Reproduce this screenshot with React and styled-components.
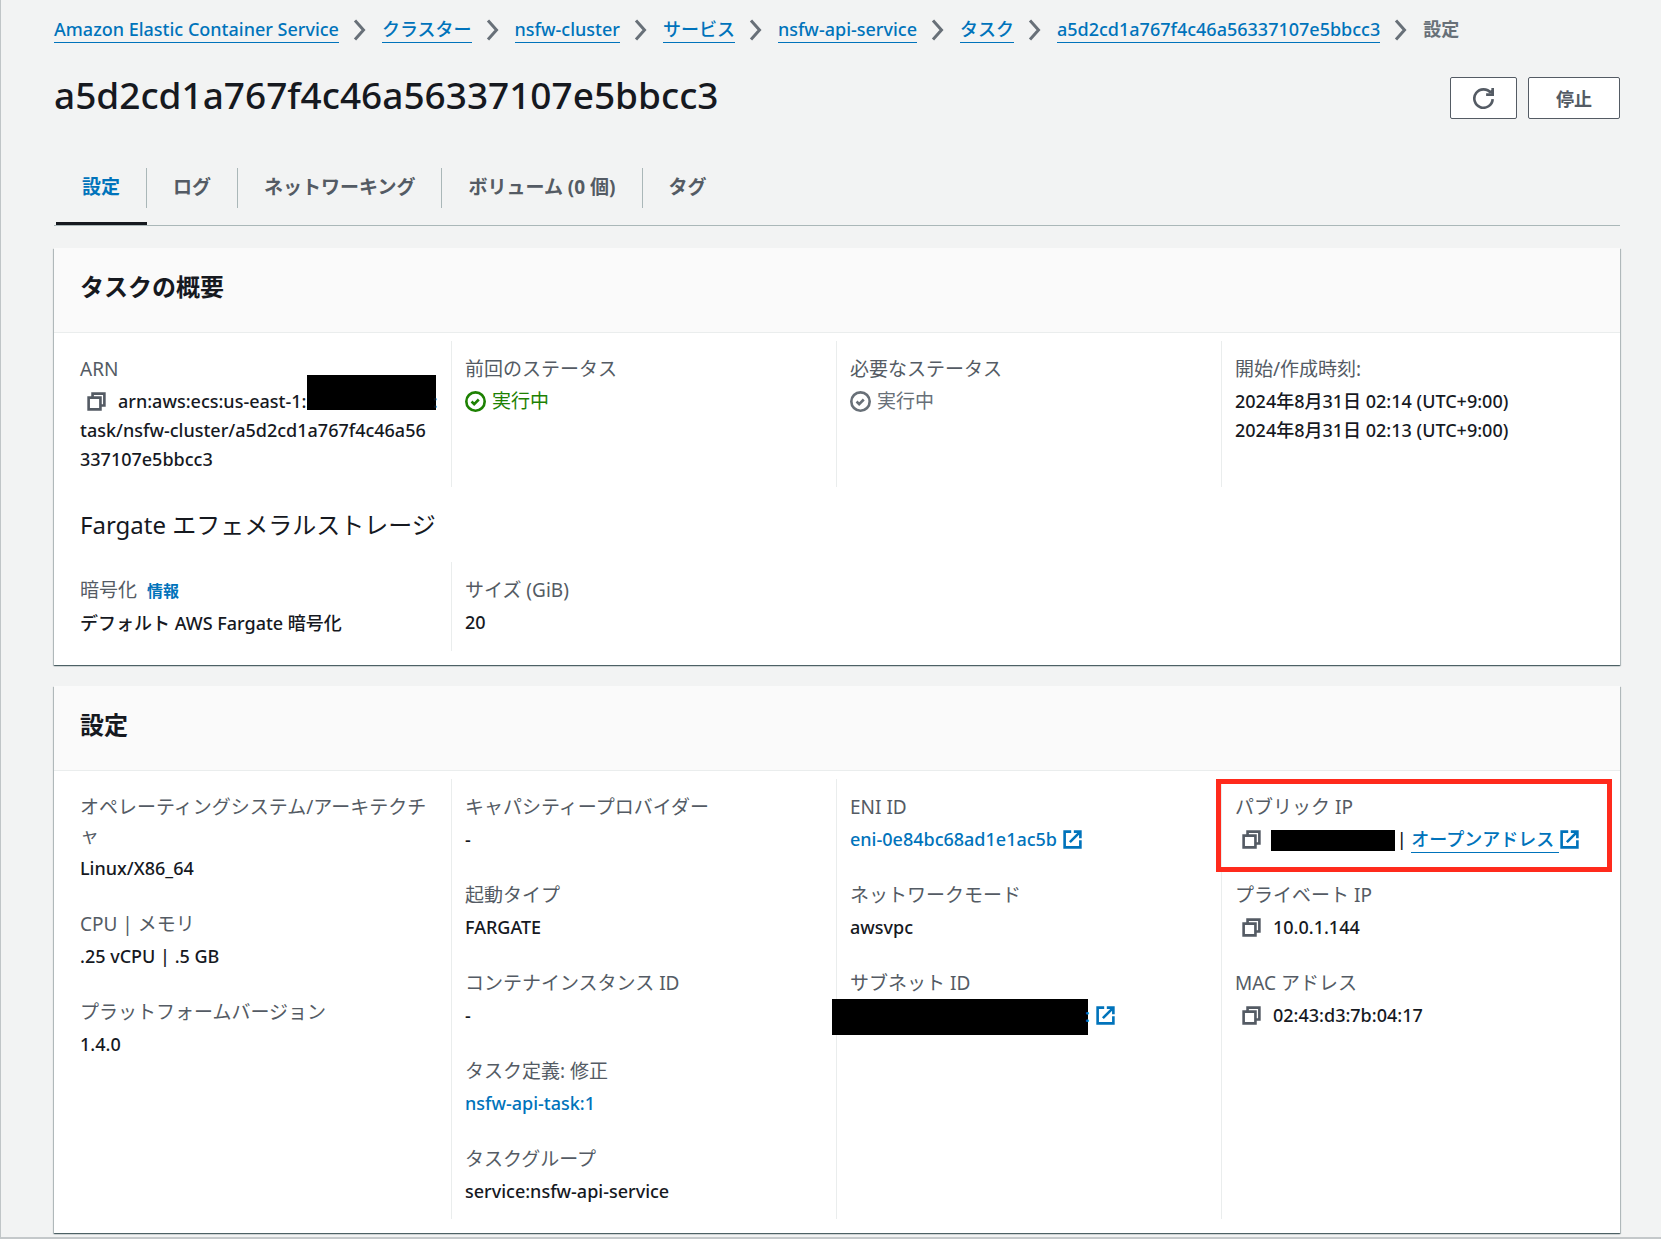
import styled, { createGlobalStyle } from "styled-components";

const GlobalStyle = createGlobalStyle`
  * {
    box-sizing: border-box;
  }

  body {
    margin: 0;
    background-color: #fff;
    color: #16191f;
    font-family: "Noto Sans", "Noto Sans CJK JP", sans-serif;
    font-size: 18px;
    font-weight: 500;
    line-height: 29px;
  }
`;

const Page = styled.div`
  background-color: #f2f3f3;
  border-left: 1px solid #c0c5c7;
  border-bottom: 2px solid #c4c8ca;
  padding: 15px 41px 4px 53px;
`;

const Breadcrumbs = styled.ol`
  display: flex;
  flex-wrap: wrap;
  align-items: center;
  margin: 0;
  padding: 0;
  list-style: none;
`;

const Crumb = styled.li`
  display: flex;
  align-items: center;
  color: #687078;
  font-weight: ${(props) => (props.$current ? 700 : 500)};

  svg {
    margin: 0 15px 0 14px;
  }
`;

const Link = styled.a`
  color: #0073bb;
  text-decoration: none;
`;

const UnderlinedLink = styled(Link)`
  border-bottom: 1px solid #0073bb;
  line-height: 26px;
`;

const TitleBar = styled.header`
  display: flex;
  justify-content: space-between;
  align-items: center;
  margin-top: 28px;
`;

const Title = styled.h1`
  margin: 0;
  padding-bottom: 6px;
  font-size: 37px;
  font-weight: 500;
  line-height: 46px;
`;

const Actions = styled.div`
  display: flex;
  gap: 11px;
`;

const Button = styled.button`
  display: flex;
  align-items: center;
  justify-content: center;
  height: 42px;
  padding: 0 ${(props) => (props.$icon ? 22 : 27)}px;
  background-color: #fff;
  border: 1px solid #545b64;
  border-radius: 2px;
  color: #545b64;
  font-family: inherit;
  font-size: 18px;
  font-weight: 700;
  cursor: pointer;
`;

const Tabs = styled.div`
  display: flex;
  margin-top: 44px;
  padding-left: 2px;
  border-bottom: 1px solid #aab7b8;
`;

const Tab = styled.button`
  height: 57px;
  padding: 0 0 14px;
  background: none;
  border: none;
  border-bottom: 3px solid ${(props) => (props.$active ? "#16191f" : "transparent")};
  color: ${(props) => (props.$active ? "#0073bb" : "#545b64")};
  font-family: inherit;
  font-size: 19px;
  font-weight: 700;
  line-height: 38px;
  cursor: pointer;
`;

const TabLabel = styled.span`
  display: block;
  height: 40px;
  padding: 0 26px;
  border-right: 1px solid ${(props) => (props.$last ? "transparent" : "#aab7b8")};
`;

const Card = styled.section`
  margin-top: ${(props) => (props.$first ? 22 : 21)}px;
  padding-bottom: 14px;
  background-color: #fff;
  box-shadow: 0 1px 1px 0 rgba(0, 28, 36, 0.5), 1px 1px 1px 0 rgba(0, 28, 36, 0.2),
    -1px 1px 1px 0 rgba(0, 28, 36, 0.2);
`;

const CardHeader = styled.div`
  padding: 21px 26px 27px;
  background-color: #fafafa;
  border-bottom: 1px solid #eaeded;
`;

const CardTitle = styled.h2`
  margin: 0;
  font-size: 24px;
  font-weight: 700;
  line-height: 36px;
`;

const SubTitle = styled.h3`
  margin: 0;
  padding: 20px 26px 19px;
  font-size: 24px;
  font-weight: 400;
  line-height: 36px;
`;

const Columns = styled.div`
  display: grid;
  grid-template-columns: repeat(4, minmax(0, 1fr));
  margin-top: ${(props) => (props.$first ? 8 : 0)}px;
  padding: 0 14px 0 12px;
`;

const Column = styled.dl`
  display: flex;
  flex-direction: column;
  gap: 27px;
  margin: 0;
  padding: 14px 13px 13px 14px;

  & + & {
    padding-left: 13px;
    border-left: 1px solid #eaeded;
  }
`;

const FieldBox = styled.div`
  position: relative;
`;

const Label = styled.dt`
  color: #545b64;
  font-size: 19px;
  font-weight: 400;
  word-break: break-all;
`;

const Value = styled.dd`
  margin: 3px 0 0;
  padding-right: 4px;
  word-break: break-all;
`;

const Line = styled.span`
  display: flex;
  align-items: center;
  white-space: pre;
`;

const CopyButton = styled.button`
  display: flex;
  padding: 0 11px 0 6px;
  background: none;
  border: none;
  color: #545b64;
  cursor: pointer;
`;

const Status = styled.span`
  display: flex;
  align-items: center;
  gap: 6px;
  color: ${(props) => props.$color};
  font-size: 19px;
  font-weight: 400;
`;

const InfoLink = styled(Link)`
  margin-left: 10px;
  font-size: 16px;
  font-weight: 700;
`;

const Mask = styled.span`
  flex: none;
  width: ${(props) => props.$width}px;
  height: ${(props) => props.$height}px;
  margin: ${(props) => (props.$raised ? -24 : -4)}px -3px -6px ${(props) => props.$pull || 0}px;
  background-color: #000;
`;

const Highlight = styled.div`
  position: absolute;
  inset: -14px -19px -18px -19px;
  border: 5px solid #ff2a1c;
  pointer-events: none;
`;

const Icon = ({ children, color = "currentColor" }) => (
  <svg
    width="21"
    height="21"
    viewBox="0 0 16 16"
    fill="none"
    stroke={color}
    strokeWidth="2"
    aria-hidden="true"
  >
    {children}
  </svg>
);

const ChevronIcon = () => (
  <svg width="14" height="22" viewBox="0 0 14 22" fill="none" stroke="#687078" strokeWidth="3" aria-hidden="true">
    <path d="M2 1.5l8.5 9.5L2 20.5" />
  </svg>
);

const CopyIcon = () => (
  <Icon>
    <path d="M2 5h9v9H2z" />
    <path d="M5 5V2h9v9h-3" />
  </Icon>
);

const ExternalIcon = () => (
  <Icon color="#0073bb">
    <path d="M14 8.5V14H2V2h5" />
    <path d="M9 2h5v5M6 10l8-8" />
  </Icon>
);

const CheckIcon = () => (
  <Icon>
    <circle cx="8" cy="8" r="7" />
    <path d="M5 8l2 2 3.5-3.5" />
  </Icon>
);

const RefreshIcon = () => (
  <Icon>
    <path d="M15 8.5A7 7 0 1 1 13.6 3.8" />
    <path d="M10 5h5V0" />
    <path d="M12.5 2.5L15 5V1z" fill="currentColor" stroke="none" />
  </Icon>
);

const Copy = () => (
  <CopyButton type="button" aria-label="コピー">
    <CopyIcon />
  </CopyButton>
);

const Field = ({ label, highlighted, children }) => (
  <FieldBox>
    <Label>{label}</Label>
    <Value>{children}</Value>
    {highlighted && <Highlight />}
  </FieldBox>
);

const crumbs = [
  "Amazon Elastic Container Service",
  "クラスター",
  "nsfw-cluster",
  "サービス",
  "nsfw-api-service",
  "タスク",
  "a5d2cd1a767f4c46a56337107e5bbcc3",
];

const tabs = ["設定", "ログ", "ネットワーキング", "ボリューム (0 個)", "タグ"];

const App = () => {
  return (
    <>
      <GlobalStyle />
      <Page>
        <nav>
          <Breadcrumbs>
            {crumbs.map((crumb) => (
              <Crumb key={crumb}>
                <UnderlinedLink href="#">{crumb}</UnderlinedLink>
                <ChevronIcon />
              </Crumb>
            ))}
            <Crumb $current>設定</Crumb>
          </Breadcrumbs>
        </nav>

        <TitleBar>
          <Title>a5d2cd1a767f4c46a56337107e5bbcc3</Title>
          <Actions>
            <Button type="button" $icon aria-label="更新">
              <RefreshIcon />
            </Button>
            <Button type="button">停止</Button>
          </Actions>
        </TitleBar>

        <Tabs role="tablist">
          {tabs.map((tab, i) => (
            <Tab key={tab} type="button" role="tab" aria-selected={i === 0} $active={i === 0}>
              <TabLabel $last={i === tabs.length - 1}>{tab}</TabLabel>
            </Tab>
          ))}
        </Tabs>

        <Card $first>
          <CardHeader>
            <CardTitle>タスクの概要</CardTitle>
          </CardHeader>
          <Columns $first>
            <Column>
              <Field label="ARN">
                <Line>
                  <Copy />
                  arn:aws:ecs:us-east-1:2
                  <Mask $width={129} $height={35} $pull={-10} $raised />:
                </Line>
                task/nsfw-cluster/a5d2cd1a767f4c46a56337107e5bbcc3
              </Field>
            </Column>
            <Column>
              <Field label="前回のステータス">
                <Status $color="#1d8102">
                  <CheckIcon />
                  実行中
                </Status>
              </Field>
            </Column>
            <Column>
              <Field label="必要なステータス">
                <Status $color="#687078">
                  <CheckIcon />
                  実行中
                </Status>
              </Field>
            </Column>
            <Column>
              <Field label="開始/作成時刻:">
                <Line>2024年8月31日 02:14 (UTC+9:00)</Line>
                <Line>2024年8月31日 02:13 (UTC+9:00)</Line>
              </Field>
            </Column>
          </Columns>
          <SubTitle>Fargate エフェメラルストレージ</SubTitle>
          <Columns>
            <Column>
              <Field
                label={
                  <>
                    暗号化<InfoLink href="#">情報</InfoLink>
                  </>
                }
              >
                デフォルト AWS Fargate 暗号化
              </Field>
            </Column>
            <Column>
              <Field label="サイズ (GiB)">20</Field>
            </Column>
          </Columns>
        </Card>

        <Card>
          <CardHeader>
            <CardTitle>設定</CardTitle>
          </CardHeader>
          <Columns $first>
            <Column>
              <Field label="オペレーティングシステム/アーキテクチャ">Linux/X86_64</Field>
              <Field label="CPU | メモリ">.25 vCPU | .5 GB</Field>
              <Field label="プラットフォームバージョン">1.4.0</Field>
            </Column>
            <Column>
              <Field label="キャパシティープロバイダー">-</Field>
              <Field label="起動タイプ">FARGATE</Field>
              <Field label="コンテナインスタンス ID">-</Field>
              <Field label="タスク定義: 修正">
                <Link href="#">nsfw-api-task:1</Link>
              </Field>
              <Field label="タスクグループ">service:nsfw-api-service</Field>
            </Column>
            <Column>
              <Field label="ENI ID">
                <Link href="#">
                  <Line>
                    eni-0e84bc68ad1e1ac5b <ExternalIcon />
                  </Line>
                </Link>
              </Field>
              <Field label="ネットワークモード">awsvpc</Field>
              <Field label="サブネット ID">
                <Link href="#" aria-label="サブネット">
                  <Line>
                    <Mask $width={256} $height={36} $pull={-18} />: <ExternalIcon />
                  </Line>
                </Link>
              </Field>
            </Column>
            <Column>
              <Field label="パブリック IP" highlighted>
                <Line>
                  <Copy />
                  <Mask $width={124} $height={21} $pull={-2} /> |{" "}
                  <UnderlinedLink href="#">オープンアドレス </UnderlinedLink>
                  <ExternalIcon />
                </Line>
              </Field>
              <Field label="プライベート IP">
                <Line>
                  <Copy />
                  10.0.1.144
                </Line>
              </Field>
              <Field label="MAC アドレス">
                <Line>
                  <Copy />
                  02:43:d3:7b:04:17
                </Line>
              </Field>
            </Column>
          </Columns>
        </Card>
      </Page>
    </>
  );
};

export default App;
